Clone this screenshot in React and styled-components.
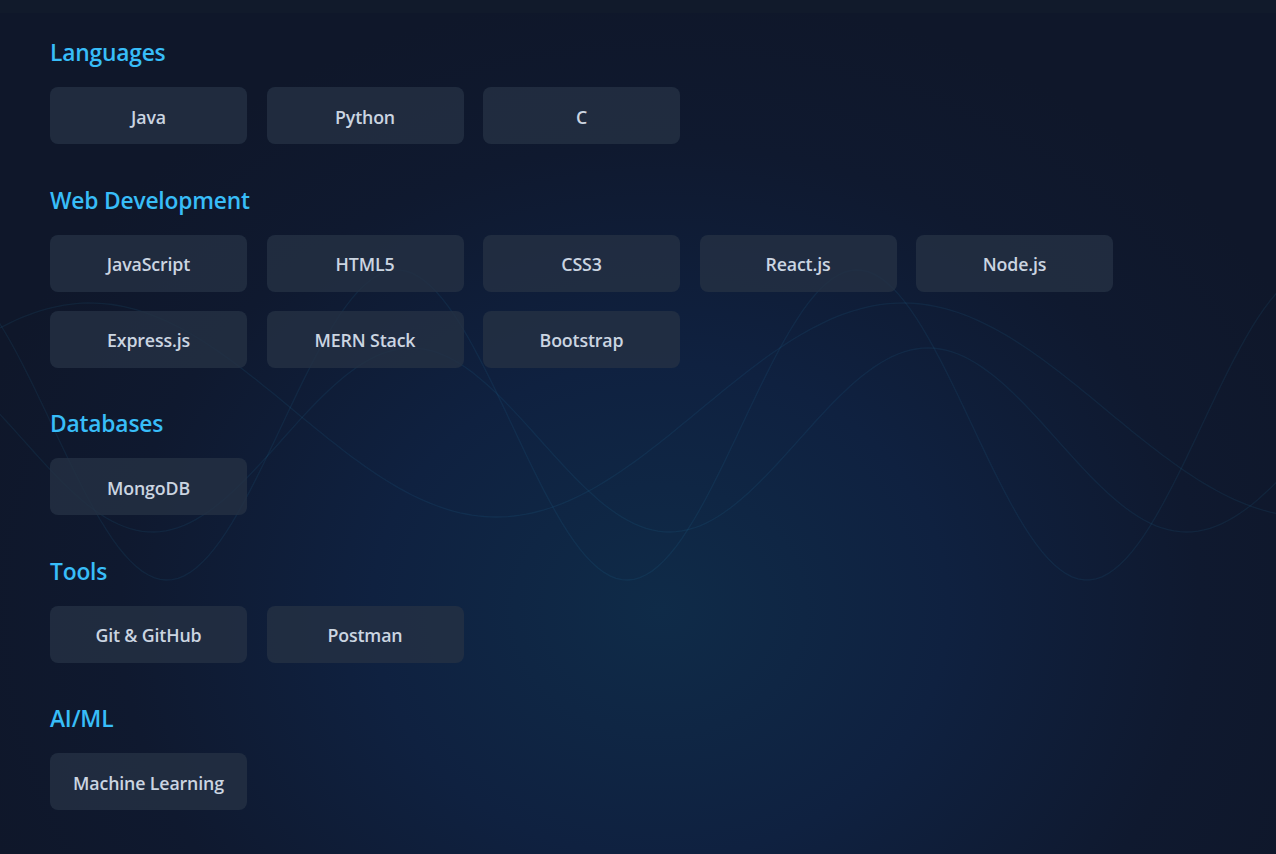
import React from "react";
import styled, { createGlobalStyle } from "styled-components";

const Global = createGlobalStyle`
  html, body { margin: 0; padding: 0; background: #0f172a; }
  * { box-sizing: border-box; }
`;

const Page = styled.div`
  position: relative;
  min-height: 854px;
  overflow: hidden;
  font-family: "Open Sans", "Noto Sans", sans-serif;
  background:
    radial-gradient(ellipse 720px 620px at 660px 610px, #0f2b48 0%, #0f2140 40%, #0f192f 75%, #0f172a 100%);
`;

const TopStrip = styled.div`
  height: 13px;
  background: #111a2b;
  position: relative;
  z-index: 1;
`;

const WaveLayer = styled.svg`
  position: absolute;
  inset: 0;
  width: 100%;
  height: 100%;
  pointer-events: none;
`;

const Content = styled.main`
  position: relative;
  z-index: 1;
  display: flex;
  flex-direction: column;
  gap: 41.5px;
  padding: 25px 50px 40px;
`;

const Section = styled.section`
  display: flex;
  flex-direction: column;
  gap: 19px;
`;

const Heading = styled.h3`
  margin: 0;
  font-size: 22.8px;
  line-height: 30px;
  font-weight: 600;
  color: #38bdf8;
  letter-spacing: -0.2px;
`;

const Grid = styled.div`
  display: grid;
  grid-template-columns: repeat(5, 197px);
  column-gap: 19.5px;
  row-gap: 19px;
`;

const Card = styled.div`
  height: 57px;
  padding-top: 2px;
  display: flex;
  align-items: center;
  justify-content: center;
  border-radius: 8px;
  background: rgba(36, 49, 68, 0.8);
  color: #cbd5e1;
  font-size: 17.8px;
  font-weight: 600;
  letter-spacing: -0.15px;
`;

const sections = [
  { title: "Languages", items: ["Java", "Python", "C"] },
  {
    title: "Web Development",
    items: ["JavaScript", "HTML5", "CSS3", "React.js", "Node.js", "Express.js", "MERN Stack", "Bootstrap"],
  },
  { title: "Databases", items: ["MongoDB"] },
  { title: "Tools", items: ["Git & GitHub", "Postman"] },
  { title: "AI/ML", items: ["Machine Learning"] },
];

function wave(center, amp, period, phaseX, sign) {
  const pts = [];
  for (let x = -20; x <= 1300; x += 6) {
    const y = center + sign * amp * Math.cos((2 * Math.PI * (x - phaseX)) / period);
    pts.push(`${x},${y.toFixed(1)}`);
  }
  return "M" + pts.join(" L");
}

const waves = [
  wave(410, 107, 813, 90, -1),
  wave(440, 92, 517, 928, -1),
  wave(425, 155, 460, 167, 1),
];

export default function App() {
  return (
    <>
      <Global />
      <Page>
        <WaveLayer viewBox="0 0 1276 854" preserveAspectRatio="none">
          {waves.map((d, i) => (
            <path key={i} d={d} fill="none" stroke="rgba(56,189,248,0.075)" strokeWidth="1.3" />
          ))}
        </WaveLayer>
        <TopStrip />
        <Content>
          {sections.map((s) => (
            <Section key={s.title}>
              <Heading>{s.title}</Heading>
              <Grid>
                {s.items.map((it) => (
                  <Card key={it}>{it}</Card>
                ))}
              </Grid>
            </Section>
          ))}
        </Content>
      </Page>
    </>
  );
}
